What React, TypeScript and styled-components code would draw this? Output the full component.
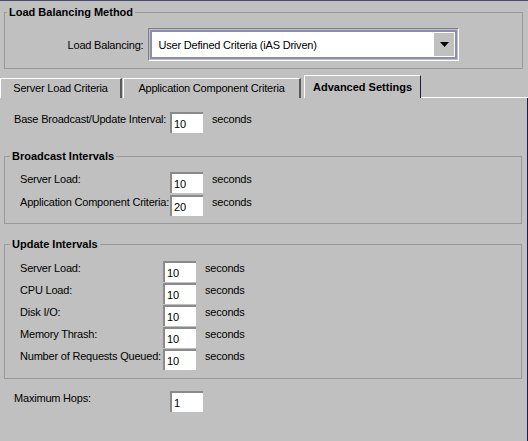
import React from 'react';
import styled, { createGlobalStyle } from 'styled-components';

const GlobalStyle = createGlobalStyle`
  html, body {
    margin: 0;
    padding: 0;
    background: #c0c0c0;
  }
  body {
    font-family: "Liberation Sans", Arial, sans-serif;
    font-size: 11px;
    letter-spacing: -0.2px;
    color: #000;
  }
`;

const Window = styled.div`
  width: 528px;
  height: 441px;
  box-sizing: border-box;
  border-top: 1px solid #4c4c6c;
  background: #c0c0c0;
  display: flex;
  flex-direction: column;
  overflow: hidden;
`;

const Group = styled.div<{ $top: number; $padTop: number; $padBottom: number }>`
  margin: ${({ $top }) => $top}px 5px 0 4px;
  padding-bottom: ${({ $padBottom }) => $padBottom}px;
  border: 1px solid #999;
  display: flex;
  flex-direction: column;
  & > *:nth-child(2) {
    margin-top: ${({ $padTop }) => $padTop}px;
  }
`;

const GroupTitle = styled.div<{ $indent: number }>`
  align-self: flex-start;
  margin: -7px 0 0 ${({ $indent }) => $indent}px;
  padding: 0 2px;
  line-height: 13px;
  font-weight: bold;
  letter-spacing: 0;
  background: #c0c0c0;
`;

const MethodRow = styled.div`
  display: flex;
  justify-content: center;
  align-items: center;
  gap: 5px;
`;

const Select = styled.div`
  box-sizing: border-box;
  width: 311px;
  height: 33px;
  border: 1px solid;
  border-color: #808080 #fff #fff #808080;
  padding: 1px;
  display: flex;
`;

const SelectInner = styled.div`
  flex: 1;
  display: flex;
  border: 2px solid #8c8cb4;
  background: #fff;
  padding: 1px;
`;

const SelectValue = styled.div`
  flex: 1;
  display: flex;
  align-items: center;
  padding-left: 5px;
`;

const ArrowButton = styled.div`
  width: 20px;
  background: #c0c0c0;
  display: flex;
  align-items: center;
  justify-content: center;
`;

const TabRow = styled.div`
  margin-top: 6px;
  height: 23px;
  display: flex;
  align-items: flex-end;
`;

const Tab = styled.div<{ $width: number; $active?: boolean; $gap: number }>`
  box-sizing: border-box;
  width: ${({ $width }) => $width}px;
  margin-left: ${({ $gap }) => $gap}px;
  height: ${({ $active }) => ($active ? 23 : 20)}px;
  background: #c0c0c0;
  border-top: 1px solid #fff;
  border-left: 1px solid #fff;
  border-right: ${({ $active }) => ($active ? '1px solid #1e1e3c' : '2px solid #5a5a5a')};
  display: flex;
  align-items: ${({ $active }) => ($active ? 'flex-start' : 'center')};
  padding-top: ${({ $active }) => ($active ? 5 : 0)}px;
  padding-bottom: ${({ $active }) => ($active ? 0 : 1)}px;
  justify-content: center;
  font-weight: ${({ $active }) => ($active ? 'bold' : 'normal')};
  letter-spacing: ${({ $active }) => ($active ? '0' : '-0.2px')};
  line-height: 13px;
  white-space: nowrap;
`;

const TabFiller = styled.div`
  flex: 1;
  height: 1px;
  background: #fff;
`;

const Panel = styled.div`
  flex: 1;
  border-right: 1px solid #1e1e3c;
  display: flex;
  flex-direction: column;
`;

const FieldGrid = styled.div<{ $label: number; $left: number; $gap: number; $top?: number }>`
  display: grid;
  grid-template-columns: ${({ $label }) => $label}px 33px max-content;
  row-gap: ${({ $gap }) => $gap}px;
  margin-left: ${({ $left }) => $left}px;
  margin-top: ${({ $top }) => $top ?? 0}px;
  align-items: start;
`;

const Label = styled.div`
  line-height: 13px;
  padding-top: 1px;
  white-space: nowrap;
`;

const Unit = styled.div`
  line-height: 13px;
  padding-top: 1px;
  padding-left: 9px;
`;

const TextField = styled.div`
  box-sizing: border-box;
  height: 21px;
  background: #fff;
  border-top: 2px solid #8a8a8a;
  border-left: 2px solid #8a8a8a;
  padding: 3px 0 0 2px;
  line-height: 14px;
  color: #000;
`;

type Field = { label: string; value: string; unit?: boolean };

const Fields: React.FC<{ items: Field[]; label: number; left: number; gap: number; top?: number }> = ({
  items,
  label,
  left,
  gap,
  top,
}) => (
  <FieldGrid $label={label} $left={left} $gap={gap} $top={top}>
    {items.map((f) => (
      <React.Fragment key={f.label}>
        <Label>{f.label}</Label>
        <TextField>{f.value}</TextField>
        <Unit>{f.unit === false ? '' : 'seconds'}</Unit>
      </React.Fragment>
    ))}
  </FieldGrid>
);

const broadcast: Field[] = [
  { label: 'Server Load:', value: '10' },
  { label: 'Application Component Criteria:', value: '20' },
];

const updates: Field[] = [
  { label: 'Server Load:', value: '10' },
  { label: 'CPU Load:', value: '10' },
  { label: 'Disk I/O:', value: '10' },
  { label: 'Memory Thrash:', value: '10' },
  { label: 'Number of Requests Queued:', value: '10' },
];

export default function App() {
  return (
    <>
      <GlobalStyle />
      <Window>
        <Group $top={11} $padTop={9} $padBottom={7}>
          <GroupTitle $indent={2}>Load Balancing Method</GroupTitle>
          <MethodRow>
            <span>Load Balancing:</span>
            <Select>
              <SelectInner>
                <SelectValue>User Defined Criteria (iAS Driven)</SelectValue>
                <ArrowButton>
                  <svg width="9" height="5" viewBox="0 0 9 5">
                    <polygon points="0,0 9,0 4.5,5" fill="#000" />
                  </svg>
                </ArrowButton>
              </SelectInner>
            </Select>
          </MethodRow>
        </Group>

        <TabRow>
          <Tab $width={122} $gap={0}>Server Load Criteria</Tab>
          <Tab $width={178} $gap={1}>Application Component Criteria</Tab>
          <Tab $width={117} $gap={3} $active>
            Advanced Settings
          </Tab>
          <TabFiller />
        </TabRow>

        <Panel>
          <Fields
            items={[{ label: 'Base Broadcast/Update Interval:', value: '10' }]}
            label={156}
            left={14}
            gap={0}
            top={14}
          />

          <Group $top={23} $padTop={9} $padBottom={7}>
            <GroupTitle $indent={5}>Broadcast Intervals</GroupTitle>
            <Fields items={broadcast} label={150} left={15} gap={2} />
          </Group>

          <Group $top={20} $padTop={10} $padBottom={8}>
            <GroupTitle $indent={5}>Update Intervals</GroupTitle>
            <Fields items={updates} label={143} left={15} gap={1} />
          </Group>

          <Fields
            items={[{ label: 'Maximum Hops:', value: '1', unit: false }]}
            label={156}
            left={14}
            gap={0}
            top={12}
          />
        </Panel>
      </Window>
    </>
  );
}
